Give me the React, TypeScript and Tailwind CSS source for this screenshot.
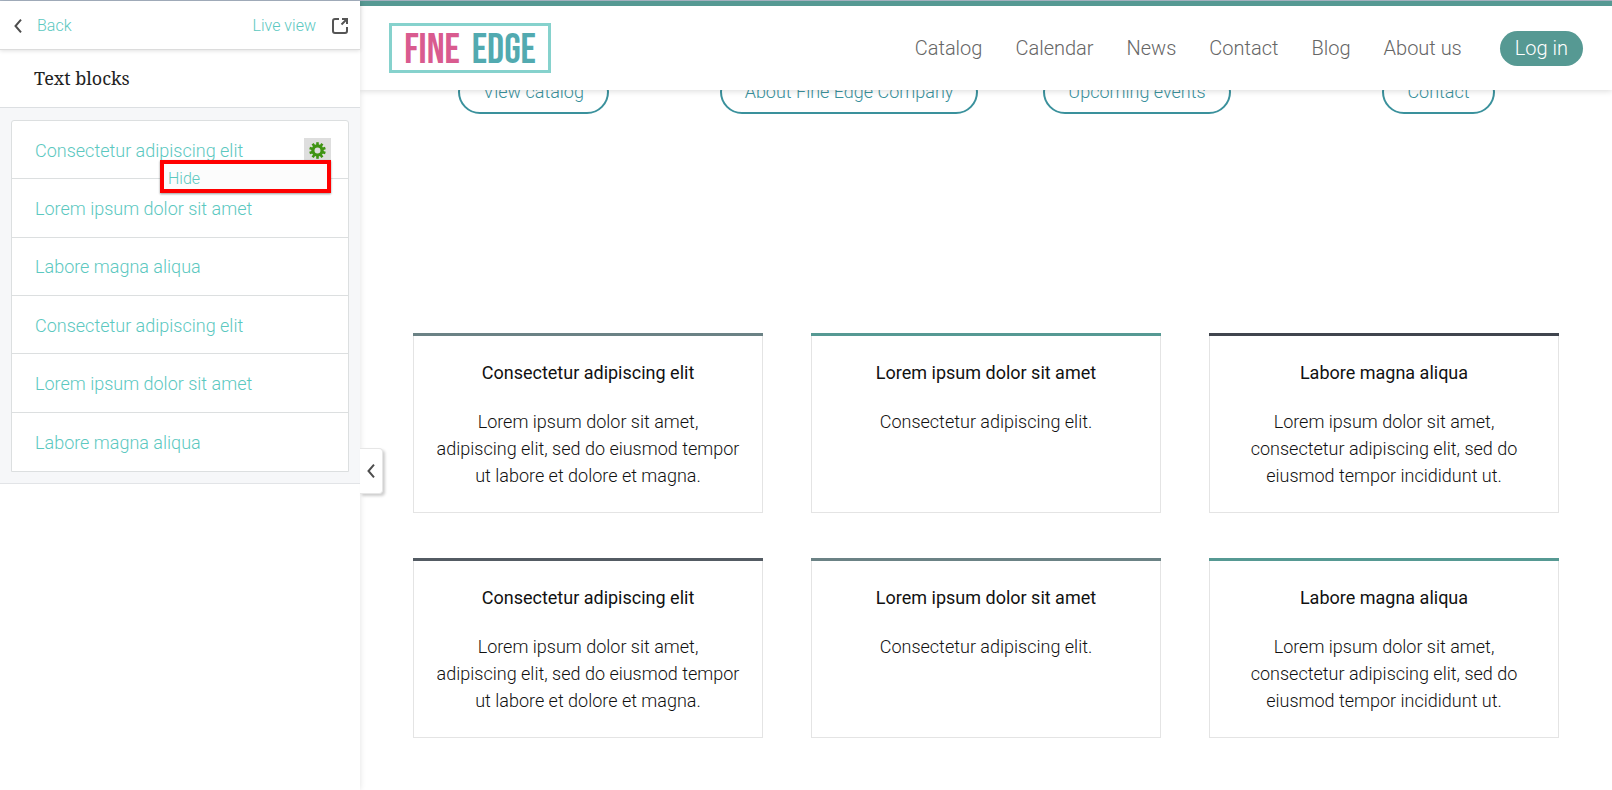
const roboto = "font-['Roboto','Liberation_Sans',sans-serif]";

const listItems = [
  'Consectetur adipiscing elit',
  'Lorem ipsum dolor sit amet',
  'Labore magna aliqua',
  'Consectetur adipiscing elit',
  'Lorem ipsum dolor sit amet',
  'Labore magna aliqua',
];

const navItems = ['Catalog', 'Calendar', 'News', 'Contact', 'Blog', 'About us'];

const actions = ['View catalog', 'About Fine Edge Company', 'Upcoming events', 'Contact'];

const cards = [
  { title: 'Consectetur adipiscing elit', lines: ['Lorem ipsum dolor sit amet,', 'adipiscing elit, sed do eiusmod tempor', 'ut labore et dolore et magna.'], bar: 'bg-[#6b8285]' },
  { title: 'Lorem ipsum dolor sit amet', lines: ['Consectetur adipiscing elit.'], bar: 'bg-[#569993]' },
  { title: 'Labore magna aliqua', lines: ['Lorem ipsum dolor sit amet,', 'consectetur adipiscing elit, sed do', 'eiusmod tempor incididunt ut.'], bar: 'bg-[#40454e]' },
  { title: 'Consectetur adipiscing elit', lines: ['Lorem ipsum dolor sit amet,', 'adipiscing elit, sed do eiusmod tempor', 'ut labore et dolore et magna.'], bar: 'bg-[#535b63]' },
  { title: 'Lorem ipsum dolor sit amet', lines: ['Consectetur adipiscing elit.'], bar: 'bg-[#6b8285]' },
  { title: 'Labore magna aliqua', lines: ['Lorem ipsum dolor sit amet,', 'consectetur adipiscing elit, sed do', 'eiusmod tempor incididunt ut.'], bar: 'bg-[#569993]' },
];

function ChevronLeft() {
  return (
    <svg width="8" height="14" viewBox="0 0 8 14" fill="none" stroke="#4d4d4d" strokeWidth="2" aria-hidden="true">
      <path d="M7 0.7 1.5 7 7 13.3" />
    </svg>
  );
}

function ExternalIcon() {
  return (
    <svg width="16" height="16" viewBox="0 0 16 16" fill="none" stroke="#555" strokeWidth="2" aria-hidden="true">
      <path d="M7 1H3Q1 1 1 3V13Q1 15 3 15H13Q15 15 15 13V9" />
      <path d="M10 1H15V6M15 1 9.500 6.500" />
    </svg>
  );
}

function GearIcon() {
  return (
    <svg width="17" height="17" viewBox="-8 -8 16 16" aria-hidden="true">
      <g fill="#3f9413">
        {[0, 36, 72, 108, 144].map((angle) => (
          <rect key={angle} x="-1.2" y="-7.800" width="2.400" height="15.600" transform={`rotate(${angle})`} />
        ))}
        <circle r="5.800" />
      </g>
      <circle r="2.800" fill="#dedede" />
    </svg>
  );
}

function Sidebar() {
  return (
    <aside className="relative z-20 w-[360px] shrink-0 bg-white shadow-[0_0_6px_rgba(0,0,0,0.12)]">
      <div className="relative flex h-[49px] items-center justify-between border-b border-[#dcdcdc] pt-px pr-3 pl-[14px] text-base font-light text-[#5cc8bf] shadow-[0_1px_4px_rgba(0,0,0,0.12)]">
        <a href="#back" className="flex items-center gap-[15px]">
          <ChevronLeft />
          Back
        </a>
        <a href="#live" className="flex items-center gap-4">
          Live view
          <ExternalIcon />
        </a>
      </div>
      <h1 className="flex h-[58px] items-center border-b border-[#dcdfe2] pb-px pl-[34px] font-['Roboto_Slab','Noto_Serif','DejaVu_Serif',serif] text-lg text-[#222]">
        Text blocks
      </h1>
      <div className="border-b border-[#e2e4e7] bg-[#f6f7f9] px-[11px] pt-3 pb-[11px]">
        <ul className="grid min-h-[352px] auto-rows-fr divide-y divide-[#dcdfe0] rounded-t-[3px] border border-[#dcdfe0] bg-white text-lg font-light text-[#5cc8bf]">
          {listItems.map((item, index) => (
            <li key={index} className="relative flex items-center justify-between pt-[2px] pr-[17px] pl-[23px]">
              <a href="#block">{item}</a>
              {index === 0 && (
                <>
                  <button type="button" aria-label="Block settings" className="flex h-[26px] w-[27px] items-center justify-center bg-[#dedede] pr-px">
                    <GearIcon />
                  </button>
                  <div className="absolute top-[39px] right-[17px] z-10 flex h-[33px] w-[171px] border-4 border-[#ff0000] bg-[#fcfcfc] text-base shadow-[0_1px_2px_rgba(0,0,0,0.4)]">
                    <button type="button" className="grow px-1 pt-[3px] text-left">Hide</button>
                  </div>
                </>
              )}
            </li>
          ))}
        </ul>
      </div>
      <button
        type="button"
        aria-label="Collapse panel"
        className="absolute top-[447px] left-full flex h-[46px] w-[23px] items-center rounded-r-[4px] border border-l-0 border-[#e6e6e6] bg-white pl-[7px] shadow-[2px_2px_3px_rgba(0,0,0,0.2)]"
      >
        <ChevronLeft />
      </button>
    </aside>
  );
}

function Logo() {
  return (
    <a href="#home" className="flex h-[50px] w-[162px] items-center justify-center gap-3 border-[3px] border-[#86d2cd] pt-[6px] font-['Bebas_Neue','Roboto_Condensed','Liberation_Sans_Narrow',sans-serif] text-[42px] leading-none font-normal text-[#52aab0]">
      <span className="text-[#d95b8f]">FINE</span>
      <span>EDGE</span>
    </a>
  );
}

function Header() {
  return (
    <header className="relative z-10 flex h-[89px] items-center justify-between border-t-[5px] border-[#569993] bg-white px-[29px] shadow-[0_1px_6px_rgba(0,0,0,0.15)]">
      <Logo />
      <div className="flex items-center gap-[38px]">
        <nav className="flex gap-[33px] text-xl font-light text-[#666]">
          {navItems.map((item) => (
            <a key={item} href="#nav">{item}</a>
          ))}
        </nav>
        <button type="button" className="h-[35px] rounded-[18px] bg-[#569993] px-[15px] text-xl font-light text-white">
          Log in
        </button>
      </div>
    </header>
  );
}

export default function App() {
  return (
    <div className={`flex min-h-screen border-t border-[#adb9c9] bg-white ${roboto}`}>
      <Sidebar />
      <div className="min-w-0 grow">
        <Header />
        <main>
          <div className="-mt-5 grid grid-cols-[329fr_302fr_274fr_329fr] justify-items-center px-[9px]">
            {actions.map((label) => (
              <button key={label} type="button" className="h-11 rounded-[22px] border-2 border-[#3a919c] px-[23px] text-lg font-light text-[#3a919c]">
                {label}
              </button>
            ))}
          </div>
          <div className="grid grid-cols-3 gap-x-12 gap-y-[45px] px-[53px] pt-[219px] pb-[52px]">
            {cards.map((card, index) => (
              <article key={index} className="flex min-h-[180px] flex-col border border-t-0 border-[#e4e4e4] text-center text-lg leading-[27px] text-[#111]">
                <div className={`-mx-px h-[3px] ${card.bar}`} />
                <h2 className="pt-[23px] font-normal">{card.title}</h2>
                <p className="pt-[22px] font-light">
                  {card.lines.map((line) => (
                    <span key={line} className="block">{line}</span>
                  ))}
                </p>
              </article>
            ))}
          </div>
        </main>
      </div>
    </div>
  );
}
